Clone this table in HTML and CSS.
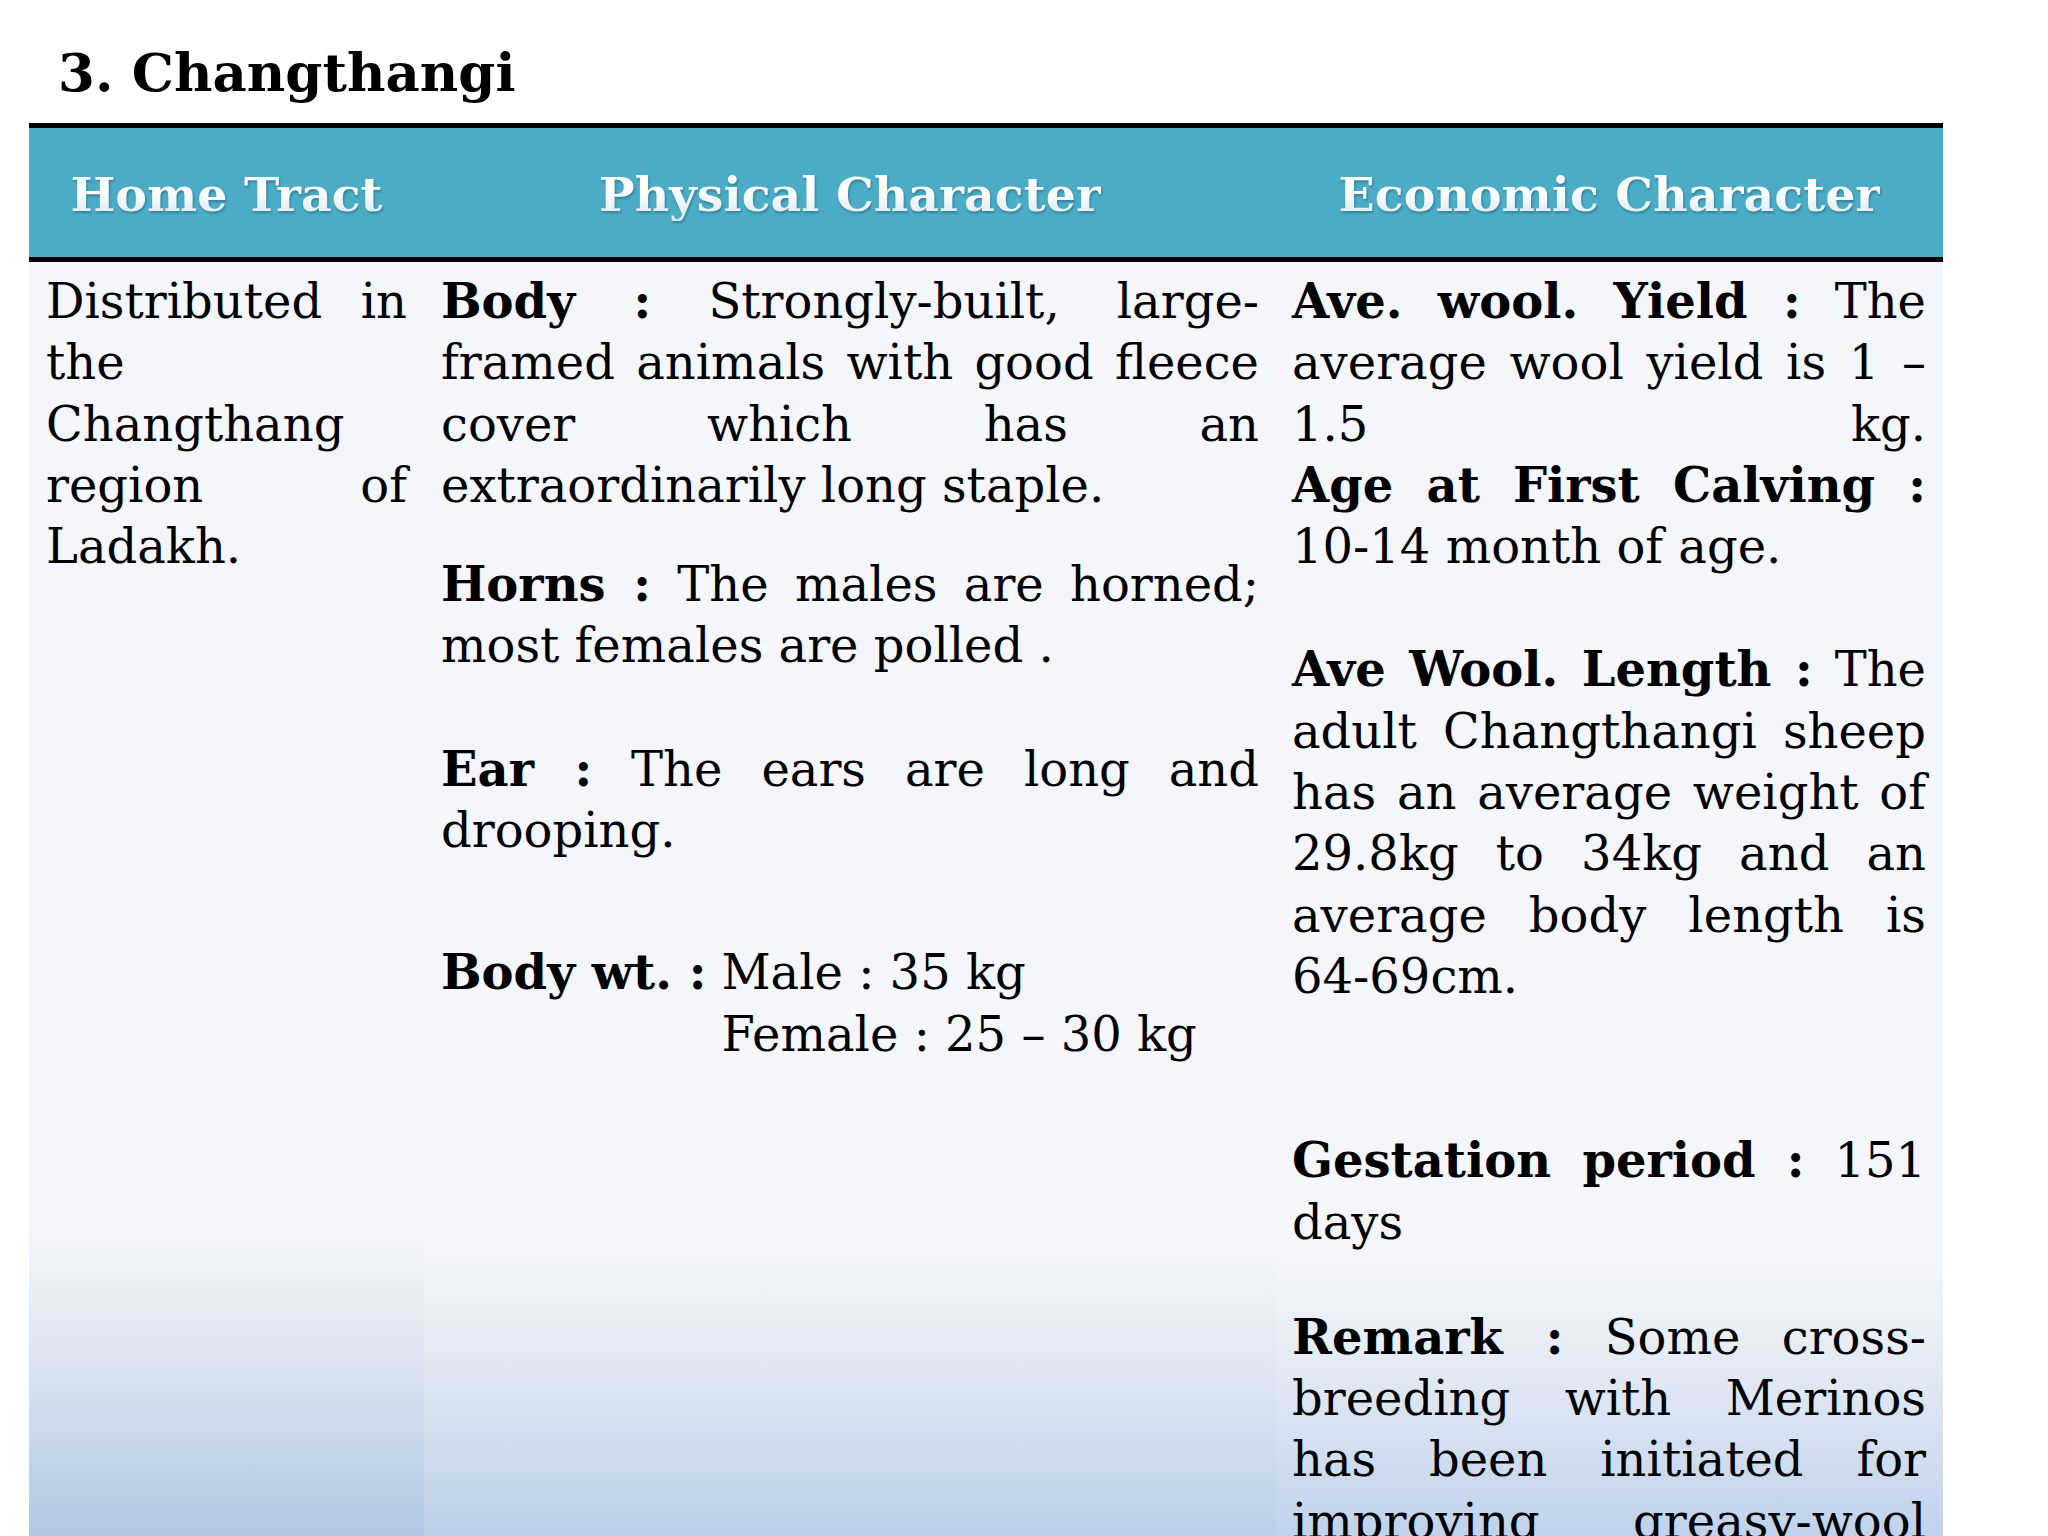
FILE: index.html
```html
<!DOCTYPE html>
<html lang="en">
<head>
<meta charset="utf-8">
<title>3. Changthangi</title>
<link rel="stylesheet" href="styles.css">
</head>
<body>
<div class="page">
  <h1 class="title">3. Changthangi</h1>
  <div class="tbl">
    <div class="th"><span class="th-text">Home Tract</span></div>
    <div class="th"><span class="th-text">Physical Character</span></div>
    <div class="th"><span class="th-text">Economic Character</span></div>

    <div class="td c1">
      <p class="para">
        <span class="ln">Distributed in</span>
        <span class="ln">the</span>
        <span class="ln">Changthang</span>
        <span class="ln">region of</span>
        <span class="ln end">Ladakh.</span>
      </p>
    </div>

    <div class="td c2">
      <p class="para">
        <span class="ln"><b>Body :</b> Strongly-built, large-</span>
        <span class="ln">framed animals with good fleece</span>
        <span class="ln">cover which has an</span>
        <span class="ln end">extraordinarily long staple.</span>
      </p>
      <p class="para horns">
        <span class="ln"><b>Horns :</b> The males are horned;</span>
        <span class="ln end">most females are polled .</span>
      </p>
      <p class="para ear">
        <span class="ln"><b>Ear :</b> The ears are long and</span>
        <span class="ln end">drooping.</span>
      </p>
      <div class="weight">
        <b class="wlabel">Body wt. :</b>
        <div class="wvals">
          <span>Male : 35 kg</span>
          <span>Female : 25 – 30 kg</span>
        </div>
      </div>
    </div>

    <div class="td c3">
      <p class="para">
        <span class="ln"><b>Ave. wool. Yield :</b> The</span>
        <span class="ln">average wool yield is 1 –</span>
        <span class="ln">1.5 kg.</span>
        <span class="ln"><b>Age at First Calving :</b></span>
        <span class="ln end">10-14 month of age.</span>
      </p>
      <p class="para length">
        <span class="ln"><b>Ave Wool. Length :</b> The</span>
        <span class="ln">adult Changthangi sheep</span>
        <span class="ln">has an average weight of</span>
        <span class="ln">29.8kg to 34kg and an</span>
        <span class="ln">average body length is</span>
        <span class="ln end">64-69cm.</span>
      </p>
      <p class="para gest">
        <span class="ln"><b>Gestation period :</b> 151</span>
        <span class="ln end">days</span>
      </p>
      <p class="para remark">
        <span class="ln"><b>Remark :</b> Some cross-</span>
        <span class="ln">breeding with Merinos</span>
        <span class="ln">has been initiated for</span>
        <span class="ln">improving greasy-wool</span>
      </p>
    </div>
  </div>
</div>
</body>
</html>
```

FILE: styles.css
```css
html, body {
  margin: 0;
  padding: 0;
  background: #ffffff;
  overflow: hidden;
}

.page {
  width: 2048px;
  height: 1536px;
  overflow: hidden;
  font-family: "DejaVu Serif", "Liberation Serif", serif;
  color: #000;
}

.title {
  margin: 38px 0 0 58px;
  font-size: 53px;
  line-height: 68px;
  font-weight: bold;
  height: 68px;
}

.tbl {
  margin: 17px 0 0 29px;
  width: 1914px;
  display: grid;
  grid-template-columns: 395px 852px 667px;
  grid-template-rows: 139px 1274px;
}

.th {
  background: #4bacc6;
  border-top: 5px solid #000;
  border-bottom: 5px solid #000;
  display: flex;
  align-items: center;
  justify-content: center;
  padding-top: 2px;
  font-weight: bold;
  font-size: 47.5px;
  line-height: 54px;
}

.th-text {
  color: transparent;
  background: linear-gradient(to bottom, #ffffff 0%, #ffffff 45%, #d3e4f0 100%);
  -webkit-background-clip: text;
  background-clip: text;
  filter: drop-shadow(1px 2px 1px rgba(10, 50, 70, 0.35));
}

.td {
  padding: 9px 17px 0 17px;
  font-size: 48px;
  line-height: 61.3px;
  overflow: hidden;
}

.c1 {
  background: linear-gradient(to bottom, #f4f6fb 0, #f4f6fb 965px, #dfe6f1 1085px, #b0c7e2 1274px);
}

.c2 {
  background: linear-gradient(to bottom, #f4f6fb 0, #f4f6fb 980px, #e2e9f3 1095px, #bbcfe8 1274px);
}

.c3 {
  padding-left: 16px;
  background: linear-gradient(to bottom, #f4f6fb 0, #f4f6fb 990px, #e4eaf4 1105px, #c0d2ec 1274px);
}

.para {
  margin: 0;
}

.ln {
  display: block;
  text-align: justify;
  text-align-last: justify;
  white-space: nowrap;
}

.ln.end {
  text-align-last: left;
}

.horns {
  margin-top: 38px;
}

.ear {
  margin-top: 62px;
}

.weight {
  margin-top: 81px;
  display: flex;
  gap: 15px;
}

.wvals {
  display: flex;
  flex-direction: column;
}

.length {
  margin-top: 62px;
}

.gest {
  margin-top: 123px;
}

.remark {
  margin-top: 54px;
}
```
